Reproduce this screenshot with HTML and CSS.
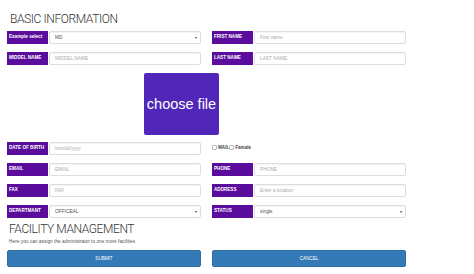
FILE: index.html
```html
<!DOCTYPE html>
<html lang="en">
<head>
    <meta charset="UTF-8">
    <meta name="viewport" content="width=device-width, initial-scale=1.0">
    <title>Basic Information</title>
    <link rel="stylesheet" href="styles.css">
</head>
<body>
    <div class="container">
        <h2 class="title">BASIC INFORMATION</h2>

        <div class="row">
            <div class="field">
                <span class="label">Example select</span>
                <div class="input select">MD<span class="caret">&#9662;</span></div>
            </div>
            <div class="field">
                <span class="label">FRIST NAME</span>
                <div class="input placeholder">First name</div>
            </div>
        </div>

        <div class="row">
            <div class="field">
                <span class="label">MIDDEL NAME</span>
                <div class="input placeholder">MIDDEL NAME</div>
            </div>
            <div class="field">
                <span class="label">LAST NAME</span>
                <div class="input placeholder">LAST NAME</div>
            </div>
        </div>

        <div class="file-row">
            <button class="file-button">choose file</button>
        </div>

        <div class="row">
            <div class="field">
                <span class="label">DATE OF BIRTH</span>
                <div class="input placeholder">mm/dd/yyyy</div>
            </div>
            <div class="field gender">
                <span class="check"></span><span class="check-text">MAIL</span>
                <span class="check"></span><span class="check-text">Famale</span>
            </div>
        </div>

        <div class="row">
            <div class="field">
                <span class="label">EMAIL</span>
                <div class="input placeholder">EMAIL</div>
            </div>
            <div class="field">
                <span class="label">PHONE</span>
                <div class="input placeholder">PHONE</div>
            </div>
        </div>

        <div class="row">
            <div class="field">
                <span class="label">FAX</span>
                <div class="input placeholder">FAX</div>
            </div>
            <div class="field">
                <span class="label">ADDRESS</span>
                <div class="input placeholder">Enter a location</div>
            </div>
        </div>

        <div class="row">
            <div class="field">
                <span class="label">DEPARTMANT</span>
                <div class="input select">OFFICEAL<span class="caret">&#9662;</span></div>
            </div>
            <div class="field">
                <span class="label">STATUS</span>
                <div class="input select">single<span class="caret">&#9662;</span></div>
            </div>
        </div>

        <h2 class="title title-second">FACILITY MANAGEMENT</h2>
        <p class="note">Here you can assign the administrator to one more facilities</p>

        <div class="row">
            <button class="action">SUBMIT</button>
            <button class="action">CANCEL</button>
        </div>
    </div>
</body>
</html>
```

FILE: styles.css
```css
body {
    margin: 0;
    background-color: #ffffff;
    font-family: 'Liberation Sans', Arial, sans-serif;
    color: #333333;
}
.container {
    width: 399px;
    padding: 10px 0 0 7px;
}
.title {
    font-family: Roboto, 'Liberation Sans', sans-serif;
    font-size: 12px;
    font-weight: 300;
    line-height: 14px;
    margin: 2px 0 5px 3px;
    color: #333333;
    letter-spacing: -0.4px;
}
.title-second {
    margin: -4px 0 0 2px;
}
.row {
    display: flex;
    gap: 11px;
    margin-bottom: 8px;
}
.field {
    display: flex;
    width: 194px;
    height: 13px;
}
.label {
    flex: 0 0 41px;
    background-color: #5a0d9d;
    color: #ffffff;
    font-size: 4.6px;
    font-weight: bold;
    line-height: 12px;
    padding-left: 2px;
    box-sizing: border-box;
    white-space: nowrap;
    overflow: hidden;
}
.input {
    flex: 1;
    margin-left: 1px;
    border: 1px solid #dddddd;
    border-radius: 2px;
    box-sizing: border-box;
    font-size: 4.8px;
    line-height: 11px;
    padding-left: 5px;
    color: #555555;
    position: relative;
    box-shadow: inset 0 1px 1px rgba(0, 0, 0, 0.05);
}
.placeholder {
    color: #aaaaaa;
}
.caret {
    position: absolute;
    right: 3px;
    top: 0;
    font-size: 4px;
    color: #444444;
}
.file-row {
    margin-bottom: 7px;
}
.file-button {
    margin-left: 137px;
    width: 75px;
    height: 62px;
    border: none;
    border-radius: 2px;
    background-color: #5127b9;
    color: #ffffff;
    font-family: 'Liberation Sans', Arial, sans-serif;
    font-size: 14.5px;
    padding: 0;
}
.gender {
    align-items: center;
    height: 13px;
    font-size: 4.6px;
    font-weight: bold;
    color: #444444;
    padding-bottom: 3px;
    box-sizing: border-box;
}
.check {
    width: 3px;
    height: 3px;
    border: 1px solid #bbbbbb;
    border-radius: 1px;
    margin-right: 1px;
}
.note {
    font-size: 4.8px;
    line-height: 6px;
    color: #555555;
    margin: 3px 0 5px 2px;
}
.action {
    width: 194px;
    height: 17px;
    border: 1px solid #2e6da4;
    border-radius: 2px;
    background-color: #337ab7;
    color: #ffffff;
    font-family: 'Liberation Sans', Arial, sans-serif;
    font-size: 4.6px;
    padding: 0;
}
```
